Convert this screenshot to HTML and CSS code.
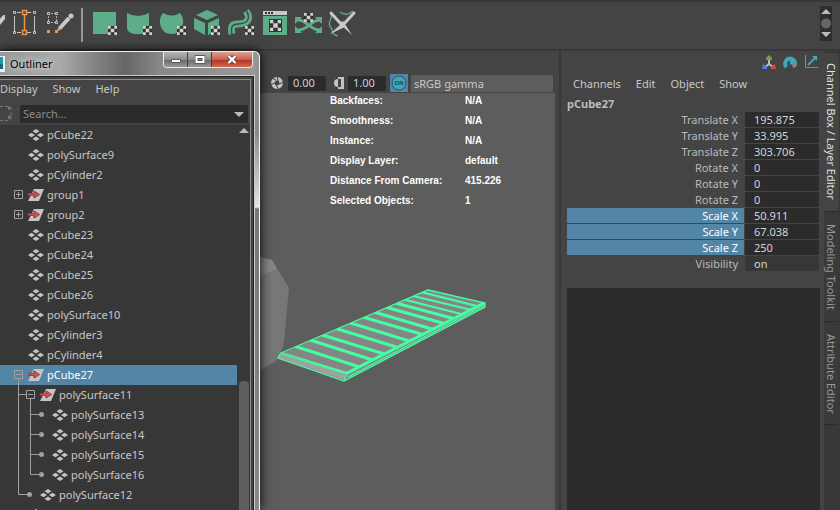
FILE: index.html
```
<!DOCTYPE html>
<html lang="en">
<head>
<meta charset="utf-8">
<title>Outliner</title>
<link rel="stylesheet" href="styles.css">
</head>
<body>
<svg class="defs" aria-hidden="true">
  <defs>
    <symbol id="checker" viewBox="0 0 10 10"><path fill="#333" d="M0 0h10v10H0z"/><path fill="#d2d2d2" d="M0 0h3v3H0zM7 0h3v3H7zM3 3h4v4H3zM0 7h3v3H0zM7 7h3v3H7z"/></symbol>
    <symbol id="mesh" viewBox="0 0 16 14"><path fill="#c4c4c4" d="M8 1l3.500 2.300L8 5.600 4.500 3.300zM3.500 4.700L7 7 3.500 9.300 0 7zM12.500 4.700L16 7l-3.500 2.300L9 7zM8 8.400l3.500 2.300L8 13l-3.500-2.300z"/></symbol>
    <symbol id="group" viewBox="0 0 16 14"><path fill="#c4c4c4" d="M6 1h10l-5 12H0z"/><path d="M0 6.500h8" stroke="#4a4444" stroke-width="2.600"/><path d="M6 3l5.500 3.500L6 10z" fill="#4a4444" stroke="#4a4444"/><path fill="none" stroke="#e0484a" stroke-width="1.600" d="M0 6.500h8"/><path fill="#e0484a" d="M6.500 3.500l5 3-5 3z"/></symbol>
    <symbol id="plus" viewBox="0 0 9 9"><path fill="none" stroke="#a0a0a0" d="M.5.5h8v8h-8zM2 4.500h5M4.500 2v5"/></symbol>
    <symbol id="minus" viewBox="0 0 9 9"><path fill="none" stroke="#a0a0a0" d="M.5.5h8v8h-8zM2 4.500h5"/></symbol>
    <clipPath id="top"><path d="M281 353L428 290l57 13-138 71z"/></clipPath>
  </defs>
</svg>
<div class="app">
  <header class="shelf">
    <div class="tools">
      <svg class="pen" viewBox="0 0 5 32"><path d="M-6 21L4 9" stroke="#c9c9c9" stroke-width="4" stroke-linecap="round"/></svg>
      <button class="tool" aria-label="Insert edge loop"><svg viewBox="0 0 32 32"><g fill="none" stroke="#c4c4c4"><path d="M6.500 8v15M26.500 8v15M9 4.500h4M19 4.500h4M9 24.500h4M19 24.500h4"/><path d="M5.500 3.500h2v2h-2zM25.500 3.500h2v2h-2zM5.500 23.500h2v2h-2zM25.500 23.500h2v2h-2z"/></g><g fill="none" stroke="#e8944a" stroke-width="1.500"><path d="M16.500 7v15M14.500 2.500h4v4h-4zM14.500 22.500h4v4h-4z"/></g></svg></button>
      <button class="tool" aria-label="Quad draw"><svg viewBox="0 0 32 32"><path d="M6.500 8v6M9 5.500h4M9 14.500h4M14.500 8v6" stroke="#aaa" stroke-dasharray="2 1"/><path fill="none" stroke="#c4c4c4" d="M5.500 4.500h2v2h-2zM13.500 4.500h2v2h-2zM5.500 13.500h2v2h-2zM13.500 13.500h2v2h-2z"/><path fill="#e8944a" d="M5 22h3v3H5zM13 22h3v3h-3z"/><path d="M14 24l3-6 3 3z" fill="#aaa"/><path stroke="#c9c9c9" stroke-width="4" d="M18 20L27 10"/><circle cx="29" cy="8" r="2.500" fill="#c9c9c9"/></svg></button>
      <span class="divider"></span>
      <button class="tool" aria-label="Planar mapping"><svg viewBox="0 0 32 32"><path fill="#5ead88" d="M4 4h23v22H4z"/><use href="#checker" x="19" y="18" width="9" height="9"/></svg></button>
      <button class="tool" aria-label="Cylindrical mapping"><svg viewBox="0 0 32 32"><path fill="#5ead88" d="M4 5q11 6 22 0v19q-11 4-18 1-4-2-4-5z"/><use href="#checker" x="20" y="18" width="9" height="9"/></svg></button>
      <button class="tool" aria-label="Spherical mapping"><svg viewBox="0 0 32 32"><path fill="#5ead88" d="M6 5q9 5 17 0 4 5 3 11-3 10-11 10Q5 26 3 16q-1-6 3-11z"/><use href="#checker" x="20" y="18" width="9" height="9"/></svg></button>
      <button class="tool" aria-label="Automatic mapping"><svg viewBox="0 0 32 32"><path fill="#5ead88" d="M5 7l11-5 11 5-11 5zM3 10l11 5v12L3 21zM28 10l-11 5v12l11-6z"/><use href="#checker" x="20" y="18" width="9" height="9"/></svg></button>
      <button class="tool" aria-label="Contour stretch"><svg viewBox="0 0 32 32"><path fill="none" stroke="#5ead88" stroke-width="7" d="M7 26C4 11 14 19 21 14c4-3 3-7 0-11"/><path fill="none" stroke="#3d4f46" stroke-width="1.500" d="M7 27C4 11 14 19 21 14c4-3 3-7 0-12"/><use href="#checker" x="20" y="18" width="9" height="9"/></svg></button>
      <button class="tool" aria-label="UV editor"><svg viewBox="0 0 32 32"><path fill="#c9c9c9" d="M4 3h24v4H4z"/><path fill="#333" d="M6 4h2v2H6zM9 4h2v2H9zM12 4h2v2h-2z"/><path fill="#5ead88" d="M4 8h24v19H4z"/><path fill="#333" d="M10 11h13v13H10z"/><use href="#checker" x="11" y="12" width="11" height="11"/></svg></button>
      <button class="tool" aria-label="Unfold"><svg viewBox="0 0 32 32"><path fill="none" stroke="#5ead88" stroke-width="3" d="M5 12c9 0 12 10 22 10M27 12c-9 0-12 10-22 10"/><path fill="#5ead88" d="M2 9h7l-7 7zM29 9h-7l7 7zM2 25v-7l7 7zM29 25v-7l-7 7z"/><use href="#checker" x="11" y="5" width="9" height="9"/></svg></button>
      <button class="tool" aria-label="Cut and sew"><svg viewBox="0 0 32 32"><path fill="none" stroke="#5ead88" stroke-width="1.300" d="M4 4q1 5-1 9t2 8q0 6 6 7M13 4q6 5 13-1"/><path stroke="#c9c9c9" stroke-width="3" stroke-linecap="round" d="M4 5l10 11M27 5L16 17"/><path fill="#c9c9c9" d="M12 15l4-2 9 14zM14 16l4 3L3 26z"/></svg></button>
    </div>
    <div class="scroller"><svg viewBox="0 0 12 35"><path fill="#bbb" d="M6 3l5 5H1zM6 31l5-5H1z"/><circle cx="6" cy="17.500" r="5" fill="#666"/></svg></div>
  </header>

  <main class="work">
    <section class="view">
      <div class="viewbar">
        <svg class="glyph" viewBox="0 0 14 14"><circle cx="7" cy="7" r="4.200" fill="none" stroke="#c4c4c4" stroke-width="3.500"/><path stroke="#444" d="M7 0l1 5M14 6L9 8M9 14L6 9M0 9l5-2M2 2l4 2" /></svg>
        <input class="num" value="0.00" aria-label="Exposure">
        <svg class="glyph" viewBox="0 0 14 14"><path fill="#c4c4c4" d="M8 1h6v12H8v-2h3V3H8z"/><path fill="#c4c4c4" d="M8 3a4 4 0 0 0 0 8z"/></svg>
        <input class="num" value="1.00" aria-label="Gamma">
        <button class="on" aria-label="Color management"><svg viewBox="0 0 18 18"><circle cx="9" cy="9" r="7" fill="#3fa7b5" stroke="#2b4f60"/><text x="9" y="11" text-anchor="middle">ON</text></svg></button>
        <button class="space">sRGB gamma</button>
      </div>
      <div class="scene">
        <svg class="drawing" viewBox="0 93 555 417">
          <path fill="#777" d="M255 256l17 4 17 28-5 54q-1 8-8 19l-21 12z"/><path fill="#868686" d="M255 256l17 4 5 9-22 9z"/>
          <path fill="#858585" d="M281 354L428 289l57 14v4L344 381l-66-22z"/>
          <path fill="#a0a0a0" d="M279 354l66 20v6l-66-22z"/>
          <g class="bars" clip-path="url(#top)"><path d="M280 353l75 23M294 346l75 24M307 339l75 24M319 334l75 23M331 327l75 23M344 321l75 23M356 315l75 22M367 310l75 22M378 305l75 21M388 301l75 20"/><path class="far" d="M398 298l75 19M409 295l75 18M417 291l75 19"/></g>
          <path class="edge" d="M281 353L428 290l57 13v4L344 381l-66-23zM281 354l66 20 138-71M347 374l-3 6M348 377l137-72"/>
          <path class="rail" d="M347 373l137-70"/>
        </svg>
        <table class="hud">
          <tr><th>Backfaces:</th><td>N/A</td></tr>
          <tr><th>Smoothness:</th><td>N/A</td></tr>
          <tr><th>Instance:</th><td>N/A</td></tr>
          <tr><th>Display Layer:</th><td>default</td></tr>
          <tr><th>Distance From Camera:</th><td>415.226</td></tr>
          <tr><th>Selected Objects:</th><td>1</td></tr>
        </table>
      </div>
    </section>

    <section class="channels">
      <div class="marks">
        <svg viewBox="0 0 14 14"><path stroke="#bbb" stroke-width="2" fill="none" d="M7 4v5l-4 3M7 9l4 3"/><path fill="#6fa53c" d="M7 0l3 3v2H4V3z"/><path fill="#4a7fe0" d="M1 9l4 3v2H0z"/><path fill="#d94848" d="M13 9l1 5H9v-2z"/></svg>
        <svg viewBox="0 0 14 14"><path fill="none" stroke="#3fa7b5" stroke-width="4" d="M3.500 12A5 5 0 1 1 12 7.500H7"/><path fill="#888" d="M9 9h5q0 3-4 4z"/></svg>
        <svg viewBox="0 0 14 14"><path fill="none" stroke="#8a8a8a" d="M1.500 0v12.500H14"/><path stroke="#3fa7b5" stroke-width="2" d="M4 10l7-7"/><path fill="#3fa7b5" d="M8 1h5v5z"/></svg>
      </div>
      <nav class="menu"><button>Channels</button><button>Edit</button><button>Object</button><button>Show</button></nav>
      <h2>pCube27</h2>
      <div class="attrs">
        <div class="attr"><label for="tx">Translate X</label><input id="tx" value="195.875"></div>
        <div class="attr"><label for="ty">Translate Y</label><input id="ty" value="33.995"></div>
        <div class="attr"><label for="tz">Translate Z</label><input id="tz" value="303.706"></div>
        <div class="attr"><label for="rx">Rotate X</label><input id="rx" value="0"></div>
        <div class="attr"><label for="ry">Rotate Y</label><input id="ry" value="0"></div>
        <div class="attr"><label for="rz">Rotate Z</label><input id="rz" value="0"></div>
        <div class="attr picked"><label for="sx">Scale X</label><input id="sx" value="50.911"></div>
        <div class="attr picked"><label for="sy">Scale Y</label><input id="sy" value="67.038"></div>
        <div class="attr picked"><label for="sz">Scale Z</label><input id="sz" value="250"></div>
        <div class="attr plain"><label for="vis">Visibility</label><input id="vis" value="on"></div>
      </div>
      <div class="layers"></div>
    </section>

    <nav class="tabs">
      <button class="tab current">Channel Box / Layer Editor</button>
      <button class="tab">Modeling Toolkit</button>
      <button class="tab">Attribute Editor</button>
    </nav>
  </main>

  <aside class="window">
    <div class="titlebar">
      <svg class="logo" viewBox="0 0 5 16"><path fill="#e4f4f4" d="M0 0h5v16H0z"/><path fill="#2699a6" d="M0 1h3v12H0z"/><path fill="#176a78" d="M0 8h3v5H0z"/></svg>
      <h1>Outliner</h1>
      <div class="winbtns">
        <button aria-label="Minimize"><svg viewBox="0 0 14 10"><path fill="#fff" stroke="#555a66" d="M2.500 4.500h9v3h-9z"/></svg></button>
        <button aria-label="Maximize"><svg viewBox="0 0 14 10"><path fill="none" stroke="#555a66" stroke-width="4" d="M4 2h6v5H4z"/><path fill="none" stroke="#fff" stroke-width="2" d="M3.500 2h7v5h-7z"/></svg></button>
        <button class="close" aria-label="Close"><svg viewBox="0 0 14 10"><path stroke="#6a3a38" stroke-width="4" d="M3.500 1l7 7M10.500 1l-7 7"/><path stroke="#fff" stroke-width="2.400" d="M3.500 1l7 7M10.500 1l-7 7"/></svg></button>
      </div>
    </div>
    <div class="body">
      <nav class="menu wmenu"><button>Display</button><button>Show</button><button>Help</button></nav>
      <div class="find">
        <svg class="filter" viewBox="0 0 12 16"><path fill="none" stroke="#777" stroke-dasharray="3 2" d="M0 1.500h8l3 3v9l-3 2H0"/><path fill="#777" d="M8 1l4 2-4 2zM8 10l4 2-4 2z"/></svg>
        <div class="searchbox"><input type="search" placeholder="Search..." aria-label="Search"><svg viewBox="0 0 10 5"><path fill="#bbb" d="M0 0h10L5 5z"/></svg></div>
      </div>
      <div class="list">
        <ul class="tree">
          <li><svg class="g0"></svg><svg class="ico"><use href="#mesh"/></svg>pCube22</li>
          <li><svg class="g0"></svg><svg class="ico"><use href="#mesh"/></svg>polySurface9</li>
          <li><svg class="g0"></svg><svg class="ico"><use href="#mesh"/></svg>pCylinder2</li>
          <li><svg class="g0"><use href="#plus" x="14" y="5" width="9" height="9"/></svg><svg class="ico"><use href="#group"/></svg>group1</li>
          <li><svg class="g0"><use href="#plus" x="14" y="5" width="9" height="9"/></svg><svg class="ico"><use href="#group"/></svg>group2</li>
          <li><svg class="g0"></svg><svg class="ico"><use href="#mesh"/></svg>pCube23</li>
          <li><svg class="g0"></svg><svg class="ico"><use href="#mesh"/></svg>pCube24</li>
          <li><svg class="g0"></svg><svg class="ico"><use href="#mesh"/></svg>pCube25</li>
          <li><svg class="g0"></svg><svg class="ico"><use href="#mesh"/></svg>pCube26</li>
          <li><svg class="g0"></svg><svg class="ico"><use href="#mesh"/></svg>polySurface10</li>
          <li><svg class="g0"></svg><svg class="ico"><use href="#mesh"/></svg>pCylinder3</li>
          <li><svg class="g0"></svg><svg class="ico"><use href="#mesh"/></svg>pCylinder4</li>
          <li class="selected"><svg class="g0"><use href="#minus" x="14" y="5" width="9" height="9"/><path d="M18.500 14v6"/></svg><svg class="ico"><use href="#group"/></svg>pCube27</li>
          <li><svg class="g1"><use href="#minus" x="26" y="5" width="9" height="9"/><path d="M18.500 0v20M19 9.500h7M30.500 14v6"/></svg><svg class="ico"><use href="#group"/></svg>polySurface11</li>
          <li><svg class="g2"><path d="M18.500 0v20M30.500 0v20M31 9.500h8"/><circle cx="41.500" cy="9.500" r="2.500"/></svg><svg class="ico"><use href="#mesh"/></svg>polySurface13</li>
          <li><svg class="g2"><path d="M18.500 0v20M30.500 0v20M31 9.500h8"/><circle cx="41.500" cy="9.500" r="2.500"/></svg><svg class="ico"><use href="#mesh"/></svg>polySurface14</li>
          <li><svg class="g2"><path d="M18.500 0v20M30.500 0v20M31 9.500h8"/><circle cx="41.500" cy="9.500" r="2.500"/></svg><svg class="ico"><use href="#mesh"/></svg>polySurface15</li>
          <li><svg class="g2"><path d="M18.500 0v20M30.500 0v9.500H39"/><circle cx="41.500" cy="9.500" r="2.500"/></svg><svg class="ico"><use href="#mesh"/></svg>polySurface16</li>
          <li><svg class="g1"><path d="M18.500 0v9.500H27"/><circle cx="29.500" cy="9.500" r="2.500"/></svg><svg class="ico"><use href="#mesh"/></svg>polySurface12</li>
          <li><svg class="g0"></svg><svg class="ico"><use href="#mesh"/></svg></li>
        </ul>
        <div class="bar"><svg viewBox="0 0 10 5"><path fill="#bbb" d="M5 0l5 5H0z"/></svg><span class="thumb"></span></div>
      </div>
    </div>
  </aside>
</div>
</body>
</html>
```
FILE: styles.css
```
* { box-sizing: border-box; }
body { margin: 0; background: #444; color: #c8c8c8; font: 11px/16px "Noto Sans", "Open Sans", sans-serif; }
button { border: 0; padding: 0; background: none; color: inherit; font: inherit; }
input { min-width: 0; border: 0; outline: 0; color: inherit; font: inherit; }
h1, h2, ul { margin: 0; padding: 0; font: inherit; }
svg { display: block; flex: none; }
.defs { position: absolute; width: 0; height: 0; }
.app { position: relative; display: flex; flex-direction: column; height: 100vh; overflow: hidden; }

.shelf { display: flex; flex: none; justify-content: space-between; height: 51px; padding: 4px 8px 8px 0; border-top: 2px solid #383838; border-bottom: 2px solid #383838; }
.tools { display: flex; align-items: flex-start; padding-top: 2px; }
.pen { width: 5px; height: 32px; margin-right: 3px; }
.tool { width: 32px; height: 32px; margin-right: 2px; }
.tool svg { width: 32px; height: 32px; }
.divider { width: 2px; height: 34px; margin: 0 6px 0 5px; background: #999; }
.scroller { width: 12px; height: 35px; background: #2e2e2e; }
.scroller svg { width: 12px; height: 35px; }

.work { display: flex; flex: 1; min-height: 0; }
.view { display: flex; flex: 1; flex-direction: column; margin-right: 4px; min-width: 0; }
.viewbar { display: flex; align-items: center; height: 42px; padding: 22px 0 0 270px; }
.glyph { width: 14px; height: 14px; margin-right: 4px; }
.num { width: 38px; height: 15px; margin-right: 4px; padding: 0 5px; border-radius: 2px; background: #2b2b2b; color: #d0d0d0; }
.on { width: 18px; height: 18px; background: #5285a6; }
.on text { font: bold 6px "Liberation Sans", sans-serif; fill: #1d4450; }
.space { flex: 1; height: 17px; margin: 0 2px 0 3px; padding: 0 3px; background: #5d5d5d; text-align: left; line-height: 17px; }
.scene { position: relative; flex: 1; min-height: 0; background: #5d5d5d; }
.drawing { position: absolute; top: 0; left: 0; width: 555px; height: 417px; }
.bars { fill: none; stroke: #43ffa3; stroke-width: 3.2; }
.bars .far { stroke-width: 2.2; }
.edge { fill: none; stroke: #43ffa3; stroke-width: 1.3; }
.rail { fill: none; stroke: #43ffa3; stroke-width: 3; }
.hud { position: absolute; top: -2px; left: 330px; border-collapse: collapse; color: #fff; font: bold 10px/20px "Liberation Sans", sans-serif; }
.hud th, .hud td { padding: 0; text-align: left; font-weight: bold; }
.hud th { width: 135px; }

.channels { display: flex; flex-direction: column; width: 265px; padding: 4px 4px 0 6px; border-left: 2px solid #383838; }
.marks { display: flex; justify-content: flex-end; gap: 7px; padding-right: 2px; }
.marks svg { width: 14px; height: 14px; }
.menu { display: flex; gap: 15px; padding: 7px 6px 4px; }
.channels h2 { font-weight: bold; line-height: 16px; color: #bbb; }
.attrs { display: flex; flex-direction: column; gap: 1px; padding-right: 1px; }
.attr { display: flex; gap: 1px; height: 15px; color: #bbb; line-height: 15px; }
.attr label { flex: 1; padding-right: 6px; text-align: right; }
.attr input { width: 74px; height: 15px; padding: 0 9px; border-radius: 2px; background: #2b2b2b; color: #d4d4d4; }
.picked label { background: #5285a6; color: #fff; }
.attr.plain input { background: #373737; }
.layers { flex: 1; margin-top: 17px; background: #2b2b2b; }

.tabs { display: flex; flex-direction: column; align-items: flex-start; gap: 2px; width: 16px; padding-top: 2px; background: #383838; }
.tab { width: 15px; padding: 10px 0 11px; border-radius: 0 3px 3px 0; border-bottom: 1px solid #2b2b2b; background: #3a3a3a; color: #999; line-height: 15px; writing-mode: vertical-rl; }
.current { background: #444; color: #e0e0e0; }

.window { position: absolute; top: 51px; bottom: 0; left: 0; display: flex; flex-direction: column; width: 260px; padding-right: 4px; border-top: 1px solid #eee; border-right: 1px solid #f4f4f4; border-radius: 0 6px 0 0; background: linear-gradient(#969696, #8a8a8a 80px, #ddd 150px, #eee 155px, #777 157px, #888); box-shadow: 0 0 12px #000; }
.titlebar { display: flex; align-items: flex-start; height: 23px; padding-right: 2px; background: linear-gradient(90deg, #999, #aaa 60px, #888 90px, #666 125px, #888 160px, #999); }
.logo { width: 5px; height: 16px; margin: 4px 5px 0 0; }
.titlebar h1 { padding-top: 4px; color: #000; font-size: 11px; text-shadow: 0 0 6px #ddd, 0 0 6px #ddd; }
.winbtns { display: flex; height: 16px; margin-left: auto; border: 1px solid #e8e8e8; border-top: 0; border-radius: 0 0 4px 4px; overflow: hidden; }
.winbtns button { display: flex; align-items: center; justify-content: center; width: 24px; border-right: 1px solid #444; background: linear-gradient(#b5b5b5, #8c8c8c 50%, #666 50%, #999); }
.winbtns .close { width: 40px; border: 0; background: linear-gradient(#dfa093, #c9604f 50%, #b03020 50%, #d0684a); }
.winbtns svg { width: 14px; height: 10px; }
.body { display: flex; flex: 1; flex-direction: column; min-height: 0; padding: 4px 4px 0 0; border: 1px solid #ccc; border-width: 1px 1px 0 0; background: #444; box-shadow: inset -1px 1px #222, inset -3px 3px #444, inset -4px 4px #8a8a8a; }
.wmenu { padding: 1px 0 8px; }
.find { display: flex; gap: 8px; height: 18px; margin-bottom: 2px; padding-right: 2px; }
.filter { width: 12px; height: 16px; }
.searchbox { display: flex; flex: 1; align-items: center; padding-right: 4px; background: #2b2b2b; border-radius: 2px; }
.searchbox input { flex: 1; padding: 0 3px; background: none; font-size: 11px; }
.searchbox input::placeholder { color: #8c8c8c; }
.searchbox svg { width: 10px; height: 5px; }
.list { display: flex; flex: 1; min-height: 0; overflow: hidden; background: #373737; }
.tree { flex: 1; list-style: none; }
.tree li { display: flex; align-items: center; height: 20px; line-height: 20px; }
.tree .selected { background: #5285a6; color: #fff; }
.g0, .g1, .g2 { height: 20px; fill: #a0a0a0; stroke: none; }
.g0 path, .g1 path, .g2 path { stroke: #a0a0a0; fill: none; }
.g0 { width: 28px; }
.g1 { width: 40px; }
.g2 { width: 52px; }
.ico { width: 16px; height: 14px; margin-right: 3px; }
.bar { display: flex; flex-direction: column; align-items: flex-end; width: 13px; padding: 3px 1px 0 0; }
.bar svg { width: 10px; height: 5px; }
.thumb { flex: 1; width: 10px; margin-top: 248px; border-radius: 4px 4px 0 0; background: #5d5d5d; }
```
